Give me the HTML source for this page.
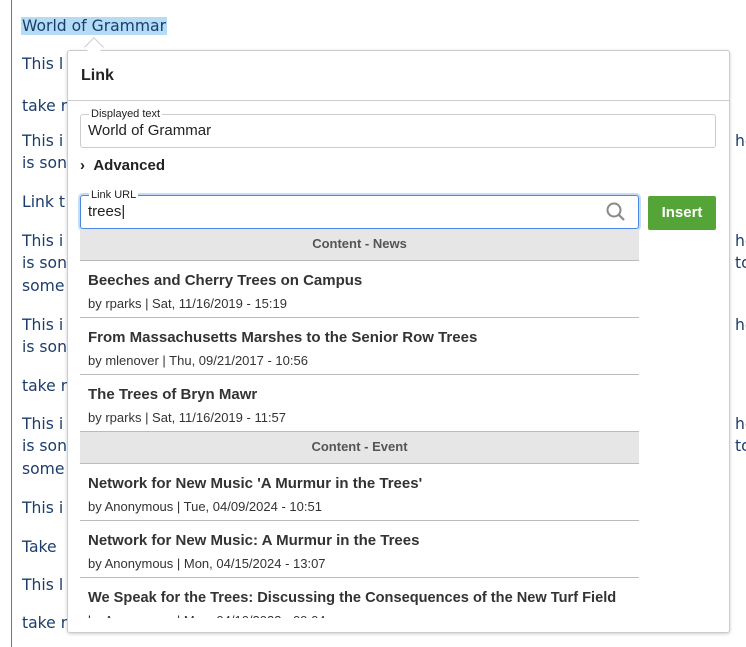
<!DOCTYPE html>
<html><head><meta charset="utf-8"><style>
*{box-sizing:border-box;margin:0;padding:0}
body{width:746px;height:647px;overflow:hidden;background:#fff;position:relative;font-family:"Liberation Sans",sans-serif}
.edl{position:absolute;left:11px;top:0;width:1px;height:647px;background:#4a7bd0}
.t{position:absolute;font-family:"DejaVu Sans",sans-serif;font-size:15.6px;color:#1c3d6b;white-space:nowrap;line-height:22px}
.sel{background:#b4dcf7;padding:0 1px}
.pop{position:absolute;left:67px;top:50px;width:663px;height:583px;background:#fff;border:1px solid #ccc;border-radius:3px;box-shadow:0 1px 3px rgba(0,0,0,.2);overflow:hidden}
.arrow{position:absolute;left:87px;top:40px;width:14px;height:14px;background:#fff;border-left:1px solid #ccc;border-top:1px solid #ccc;transform:rotate(45deg);z-index:2}
.hd{position:absolute;left:0;top:0;width:100%;height:50px;border-bottom:1px solid #ccc;font-weight:bold;font-size:16px;color:#222;padding:16px 13px}
.fld{position:absolute;border:1px solid #ccc;border-radius:3px;font-size:15px;color:#222;padding:7px 7px;white-space:nowrap}
.lg{position:absolute;top:-8px;left:8px;background:#fff;font-size:11px;color:#222;padding:0 2px;line-height:14px}
.btn{position:absolute;left:580px;top:145px;width:68px;height:34px;background:#55a438;border-radius:2px;color:#fff;font-weight:bold;font-size:15px;text-align:center;line-height:34px}
.list{position:absolute;left:12px;top:178px;width:559px;height:389px;overflow:hidden}
.gh{height:32px;background:#e6e6e6;border-bottom:1px solid #bbb;text-align:center;font-size:13px;font-weight:bold;color:#555;line-height:30px}
.it{height:57px;border-bottom:1px solid #bbb;padding:10px 8px 0;color:#333;white-space:nowrap}
.it b{display:block;font-size:15px;line-height:20px}
.it span{display:block;font-size:13px;line-height:18px;margin-top:4px}
</style></head><body>
<div class="edl"></div>
<div class="t" style="left:21px;top:15px"><span class="sel">World of Grammar</span></div>
<div class="t" style="left:22px;top:53px">This l</div>
<div class="t" style="left:22px;top:95px">take r</div>
<div class="t" style="left:22px;top:130px">This i</div>
<div class="t" style="left:22px;top:152px">is son</div>
<div class="t" style="left:22px;top:191px">Link t</div>
<div class="t" style="left:22px;top:230px">This i</div>
<div class="t" style="left:22px;top:252px">is son</div>
<div class="t" style="left:22px;top:275px">some</div>
<div class="t" style="left:22px;top:314px">This i</div>
<div class="t" style="left:22px;top:336px">is son</div>
<div class="t" style="left:22px;top:375px">take r</div>
<div class="t" style="left:22px;top:413px">This i</div>
<div class="t" style="left:22px;top:435px">is son</div>
<div class="t" style="left:22px;top:458px">some</div>
<div class="t" style="left:22px;top:497px">This i</div>
<div class="t" style="left:22px;top:536px">Take</div>
<div class="t" style="left:22px;top:574px">This l</div>
<div class="t" style="left:22px;top:612px">take r</div>
<div class="t" style="left:735px;top:130px">he</div>
<div class="t" style="left:735px;top:230px">he</div>
<div class="t" style="left:735px;top:252px">to</div>
<div class="t" style="left:735px;top:314px">he</div>
<div class="t" style="left:735px;top:413px">he</div>
<div class="t" style="left:735px;top:435px">to</div>
<div class="arrow"></div>
<div class="pop">
<div class="hd">Link</div>
<div class="fld" style="left:12px;top:63px;width:636px;height:34px"><span class="lg">Displayed text</span>World of Grammar</div>
<div style="position:absolute;left:12px;top:106px;font-size:15px;font-weight:bold;color:#222">› &nbsp;Advanced</div>
<div class="fld" style="left:12px;top:144px;width:559px;height:34px;border-color:#4a86e8;box-shadow:0 0 0 2px #c5dcf7"><span class="lg">Link URL</span>trees|
<svg style="position:absolute;right:12px;top:6px" width="20" height="20" viewBox="0 0 20 20"><circle cx="8" cy="8" r="6.5" fill="none" stroke="#888" stroke-width="2"/><line x1="12.5" y1="12.5" x2="18" y2="18" stroke="#888" stroke-width="2.2"/></svg></div>
<div class="btn">Insert</div>
<div class="list">
<div class="gh">Content - News</div>
<div class="it"><b>Beeches and Cherry Trees on Campus</b><span>by rparks | Sat, 11/16/2019 - 15:19</span></div>
<div class="it"><b>From Massachusetts Marshes to the Senior Row Trees</b><span>by mlenover | Thu, 09/21/2017 - 10:56</span></div>
<div class="it"><b>The Trees of Bryn Mawr</b><span>by rparks | Sat, 11/16/2019 - 11:57</span></div>
<div class="gh">Content - Event</div>
<div class="it"><b>Network for New Music 'A Murmur in the Trees'</b><span>by Anonymous | Tue, 04/09/2024 - 10:51</span></div>
<div class="it"><b>Network for New Music: A Murmur in the Trees</b><span>by Anonymous | Mon, 04/15/2024 - 13:07</span></div>
<div class="it"><b style="font-size:14.6px">We Speak for the Trees: Discussing the Consequences of the New Turf Field</b><span>by Anonymous | Mon, 04/10/2023 - 09:04</span></div>
</div>
</div>
</body></html>
